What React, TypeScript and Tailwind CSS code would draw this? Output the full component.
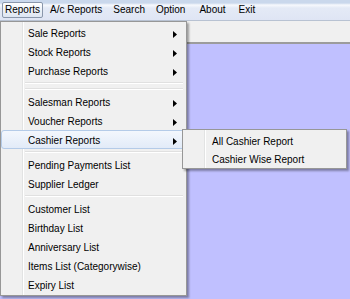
import type { ReactNode } from "react";

type Entry = { label: string; sub?: boolean; active?: boolean } | "sep";

const mainMenu: Entry[] = [
  { label: "Sale Reports", sub: true },
  { label: "Stock Reports", sub: true },
  { label: "Purchase Reports", sub: true },
  "sep",
  "sep",
  { label: "Salesman Reports", sub: true },
  { label: "Voucher Reports", sub: true },
  { label: "Cashier Reports", sub: true, active: true },
  "sep",
  { label: "Pending Payments List" },
  { label: "Supplier Ledger" },
  "sep",
  { label: "Customer List" },
  { label: "Birthday List" },
  { label: "Anniversary List" },
  { label: "Items List (Categorywise)" },
  { label: "Expiry List" },
];

const menuBar = ["Reports", "A/c Reports", "Search", "Option", "About", "Exit"];

function Arrow() {
  return (
    <svg width="4" height="7" viewBox="0 0 4 7" className="shrink-0">
      <polygon points="0,0 4,3.5 0,7" fill="#000" />
    </svg>
  );
}

function MenuItem({ label, sub, active, h }: { label: string; sub?: boolean; active?: boolean; h: string }) {
  return (
    <div
      className={
        "relative flex items-center pt-[3px] " +
        h +
        (active
          ? " mx-[-2px] rounded-[3px] border border-[#b4cbe8] bg-[linear-gradient(to_bottom,#f3f7fd,#e2ebf8)] pl-[26px] pr-[8px]"
          : " pl-[25px] pr-[7px]")
      }
    >
      <span className="flex-1 whitespace-nowrap">{label}</span>
      {sub && <Arrow />}
    </div>
  );
}

function Separator() {
  return (
    <div className="flex h-[6px] flex-col justify-center pl-[22px] pr-[1px]">
      <div className="h-px bg-[#e0e0e0]" />
      <div className="h-px bg-white" />
    </div>
  );
}

function Menu({ className, children }: { className: string; children: ReactNode }) {
  return (
    <div
      className={
        "absolute border border-[#979797] bg-[#f0f0f0] px-[2px] py-[1px] shadow-[2px_2px_2px_rgba(0,0,0,0.35)] " + className
      }
    >
      <div className="absolute bottom-0 top-0 w-px bg-[#e2e3e3]" style={{ left: 21 }} />
      <div className="absolute bottom-0 top-0 w-px bg-white" style={{ left: 22 }} />
      <div className="relative">{children}</div>
    </div>
  );
}

export default function App() {
  return (
    <div className="relative flex h-[299px] w-[350px] flex-col overflow-hidden bg-[#c0c0ff] font-['Liberation_Sans',Arial,sans-serif] text-[10px] leading-[12px] text-black">
      <div className="flex h-[21px] items-center gap-[4px] border-b border-[#b8c2d2] bg-[linear-gradient(to_bottom,#cad8ec_0px,#cad8ec_3px,#f7f9fd_5px,#e4eaf6_8px,#dfe5f4_20px)] pl-[2px]">
        {menuBar.map((m, i) => (
          <span
            key={m}
            className={
              "flex h-[16px] items-center px-[2px] " +
              (i === 0
                ? "rounded-[2px] border border-[#8a97ab] bg-[linear-gradient(to_bottom,#ffffff,#dde5f2)]"
                : "border border-transparent") +
              (i === 2 ? " ml-[1px]" : "") +
              (i === 3 ? " ml-[1px]" : "") +
              (i === 4 ? " ml-[4px]" : "") +
              (i === 5 ? " ml-[3px]" : "")
            }
          >
            {m}
          </span>
        ))}
      </div>
      <div className="h-[23px] border-b-2 border-[#9c9c9c] bg-[#f0f0f0]" />
      <div className="flex-1" />

      <Menu className="left-0 top-[21px] w-[187px]">
        {mainMenu.map((e, i) =>
          e === "sep" ? <Separator key={i} /> : <MenuItem key={i} h="h-[19px]" {...e} />,
        )}
      </Menu>

      <Menu className="left-[182px] top-[129px] w-[165px] pl-[4px]">
        <MenuItem h="h-[18px]" label="All Cashier Report" />
        <MenuItem h="h-[18px]" label="Cashier Wise Report" />
      </Menu>
    </div>
  );
}
